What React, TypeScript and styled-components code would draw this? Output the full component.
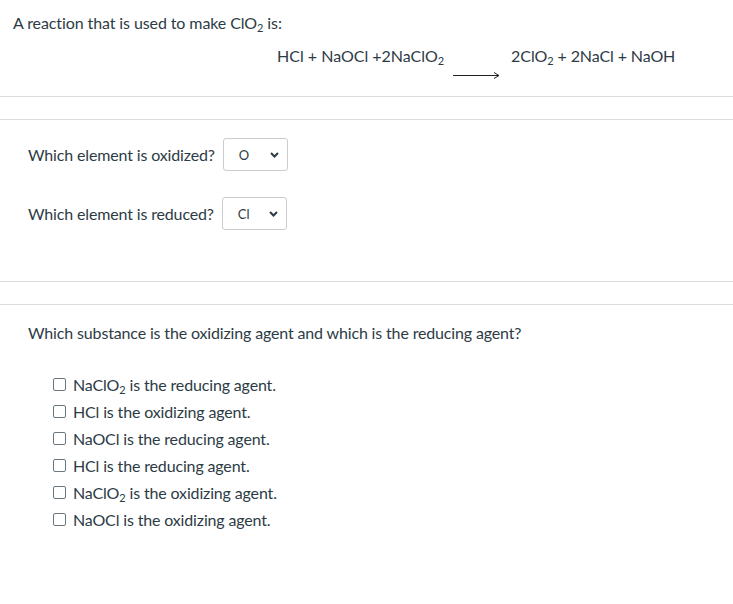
import React from "react";
import styled, { createGlobalStyle } from "styled-components";

const Global = createGlobalStyle`
  html, body { margin: 0; padding: 0; background: #fff; }
  body { font-family: Lato, "Open Sans", sans-serif; color: #2d3b45; }
`;

const Page = styled.div`
  width: 733px;
  display: flex;
  flex-direction: column;
`;

const Intro = styled.div`
  height: 96px;
  padding: 13px 0 0 13px;
  box-sizing: border-box;
`;

const Title = styled.p`
  margin: 0;
  font-size: 16px;
  line-height: 19px;
  letter-spacing: -0.1px;
`;

const Sub = styled.sub`
  font-size: 11px;
  line-height: 0;
  vertical-align: -3px;
  letter-spacing: 0;
`;

const Equation = styled.div`
  display: flex;
  align-items: flex-start;
  margin: 14px 0 0 264px;
  font-size: 16px;
  line-height: 19px;
`;

const Side = styled.span<{ $tight?: boolean }>`
  white-space: pre;
  letter-spacing: ${(p) => (p.$tight ? "-0.1px" : "0")};
`;

const ArrowBox = styled.span`
  display: flex;
  width: 67px;
  padding: 26px 0 0 9px;
  box-sizing: border-box;
`;

const Separator = styled.div`
  height: 22px;
  border-top: 1px solid #dcdcdc;
  border-bottom: 1px solid #dcdcdc;
`;

const Questions = styled.div`
  display: flex;
  flex-direction: column;
  gap: 26px;
  padding: 18px 0 51px 28px;
`;

const QRow = styled.div`
  display: flex;
  align-items: center;
  gap: 8px;
  font-size: 16px;
  letter-spacing: -0.15px;
`;

const Select = styled.div`
  display: flex;
  align-items: center;
  justify-content: space-between;
  box-sizing: border-box;
  width: 65px;
  height: 33px;
  padding: 0 8px 0 15px;
  border: 1px solid #c7cdd1;
  border-radius: 3px;
  font-size: 13px;
  letter-spacing: 0;
`;

const Agents = styled.div`
  padding: 18px 0 0 28px;
`;

const Prompt = styled.p`
  margin: 0;
  font-size: 16px;
  line-height: 19px;
  letter-spacing: -0.15px;
`;

const Options = styled.ul`
  list-style: none;
  margin: 29px 0 0 0;
  padding: 0 0 0 25px;
  display: flex;
  flex-direction: column;
`;

const Option = styled.li`
  display: flex;
  align-items: center;
  gap: 7px;
  height: 27px;
  font-size: 16px;
  letter-spacing: -0.15px;
`;

const Box = styled.span`
  width: 13px;
  height: 13px;
  box-sizing: border-box;
  border: 1px solid #6b7780;
  border-radius: 2px;
  flex: none;
`;

const Chevron = () => (
  <svg width="9" height="6" viewBox="0 0 9 6">
    <path d="M1 1 L4.5 4.5 L8 1" fill="none" stroke="#2d3b45" strokeWidth="2" />
  </svg>
);

const Arrow = () => (
  <svg width="47" height="7" viewBox="0 0 47 7">
    <path d="M0 3.5 H45" stroke="#222" strokeWidth="1" />
    <path d="M41 0.5 L46 3.5 L41 6.5" fill="none" stroke="#222" strokeWidth="1" />
  </svg>
);

const options: React.ReactNode[] = [
  <>NaClO<Sub>2</Sub> is the reducing agent.</>,
  <>HCl is the oxidizing agent.</>,
  <>NaOCl is the reducing agent.</>,
  <>HCl is the reducing agent.</>,
  <>NaClO<Sub>2</Sub> is the oxidizing agent.</>,
  <>NaOCl is the oxidizing agent.</>,
];

export default function App() {
  return (
    <Page>
      <Global />
      <Intro>
        <Title>
          A reaction that is used to make ClO<Sub>2</Sub> is:
        </Title>
        <Equation>
          <Side>
            HCl + NaOCl +2NaClO<Sub>2</Sub>
          </Side>
          <ArrowBox>
            <Arrow />
          </ArrowBox>
          <Side $tight>
            2ClO<Sub>2</Sub> + 2NaCl + NaOH
          </Side>
        </Equation>
      </Intro>
      <Separator />
      <Questions>
        <QRow>
          Which element is oxidized?
          <Select>
            O
            <Chevron />
          </Select>
        </QRow>
        <QRow>
          Which element is reduced?
          <Select>
            Cl
            <Chevron />
          </Select>
        </QRow>
      </Questions>
      <Separator />
      <Agents>
        <Prompt>Which substance is the oxidizing agent and which is the reducing agent?</Prompt>
        <Options>
          {options.map((o, i) => (
            <Option key={i}>
              <Box />
              <span>{o}</span>
            </Option>
          ))}
        </Options>
      </Agents>
    </Page>
  );
}
